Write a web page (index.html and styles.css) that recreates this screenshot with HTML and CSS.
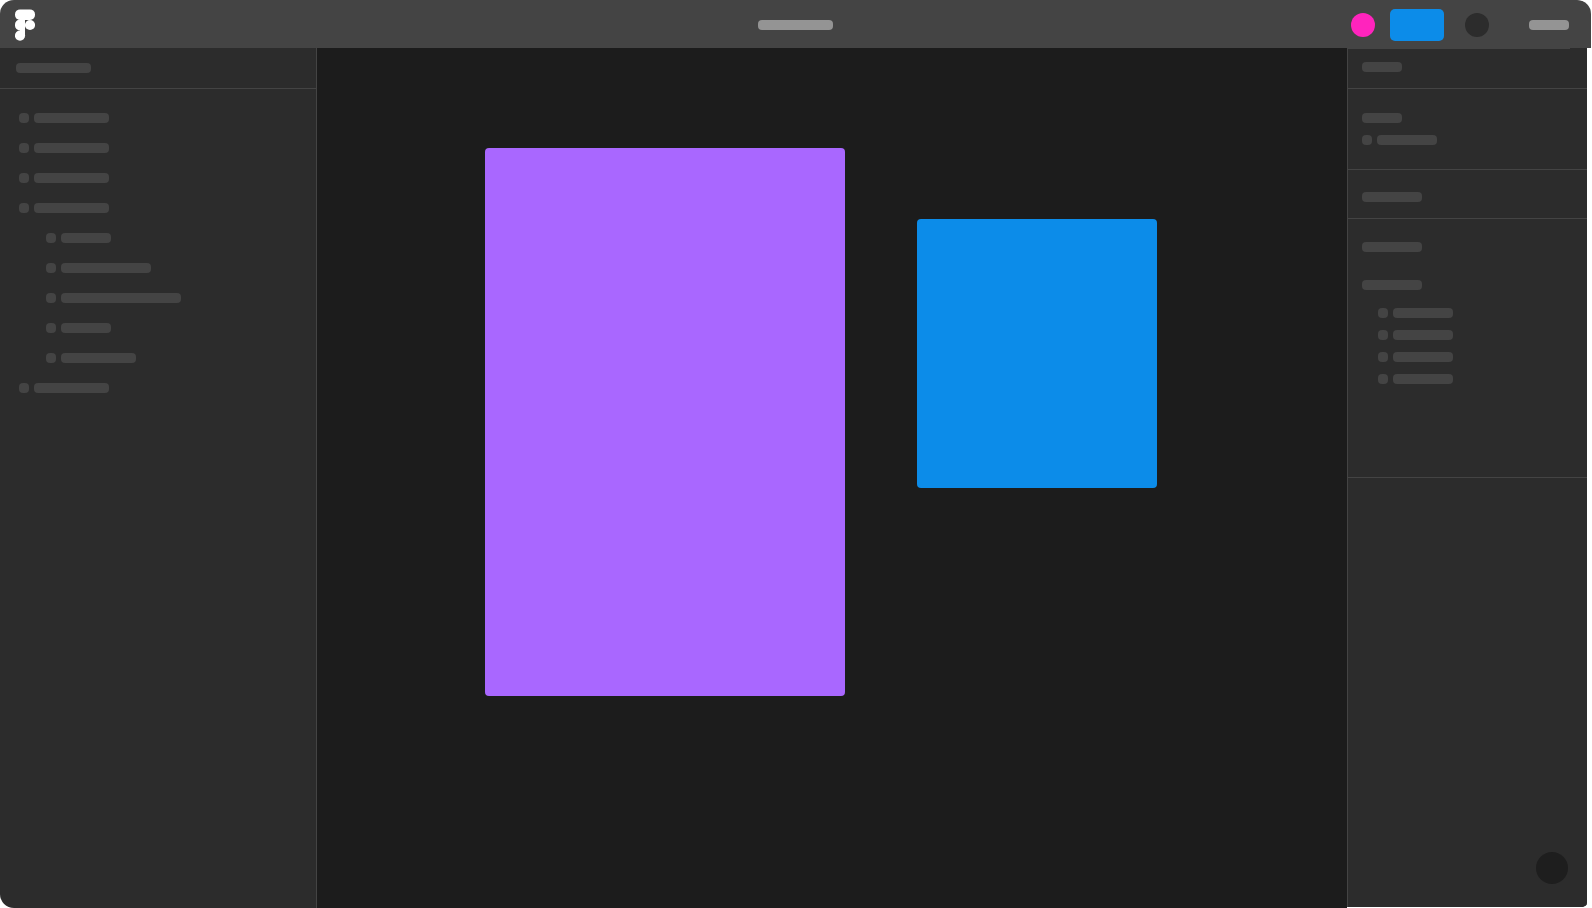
FILE: index.html
```html
<!DOCTYPE html>
<html lang="en">
<head>
<meta charset="utf-8">
<meta name="viewport" content="width=device-width, initial-scale=1">
<title>Design editor</title>
<link rel="stylesheet" href="styles.css">
</head>
<body>
<div class="app">
  <header class="topbar">
    <a class="logo" href="#" aria-label="Home">
      <svg width="20" height="32" viewBox="0 0 20 32" fill="#fff" aria-hidden="true">
        <rect x="0" y="0.4" width="20" height="10.6" rx="5"/>
        <rect x="0" y="10.6" width="10" height="10.8" rx="5"/>
        <rect x="5" y="10" width="5" height="16.6"/>
        <circle cx="5" cy="26.6" r="5.1"/>
        <circle cx="15" cy="16" r="5.1"/>
      </svg>
    </a>
    <span class="bar bar-light w75"></span>
    <div class="actions">
      <button class="avatar" type="button" aria-label="Account"></button>
      <button class="share" type="button" aria-label="Share"></button>
      <button class="present" type="button" aria-label="Present"></button>
      <span class="bar bar-light w40"></span>
    </div>
  </header>
  <div class="workspace">
    <aside class="layers">
      <div class="layers-head"><span class="bar w75"></span></div>
      <ul class="tree">
        <li class="row"><i class="dot"></i><span class="bar w75"></span></li>
        <li class="row"><i class="dot"></i><span class="bar w75"></span></li>
        <li class="row"><i class="dot"></i><span class="bar w75"></span></li>
        <li class="row"><i class="dot"></i><span class="bar w75"></span></li>
        <li>
          <ul class="branch">
            <li class="row"><i class="dot"></i><span class="bar w50"></span></li>
            <li class="row"><i class="dot"></i><span class="bar w90"></span></li>
            <li class="row"><i class="dot"></i><span class="bar w120"></span></li>
            <li class="row"><i class="dot"></i><span class="bar w50"></span></li>
            <li class="row"><i class="dot"></i><span class="bar w75"></span></li>
          </ul>
        </li>
        <li class="row"><i class="dot"></i><span class="bar w75"></span></li>
      </ul>
    </aside>
    <main class="canvas">
      <div class="frame frame-purple"></div>
      <div class="frame frame-blue"></div>
    </main>
    <aside class="inspector">
      <section class="section tabs"><span class="bar w40"></span></section>
      <section class="section layout">
        <span class="bar w40"></span>
        <div class="row"><i class="dot"></i><span class="bar w60"></span></div>
      </section>
      <section class="section fill"><span class="bar w60"></span></section>
      <section class="section styles">
        <span class="bar w60"></span>
        <div class="group">
          <span class="bar w60"></span>
          <ul class="options">
            <li class="row"><i class="dot"></i><span class="bar w60"></span></li>
            <li class="row"><i class="dot"></i><span class="bar w60"></span></li>
            <li class="row"><i class="dot"></i><span class="bar w60"></span></li>
            <li class="row"><i class="dot"></i><span class="bar w60"></span></li>
          </ul>
        </div>
      </section>
      <button class="help" type="button" aria-label="Help"></button>
    </aside>
  </div>
</div>
</body>
</html>
```
FILE: styles.css
```css
* { box-sizing: border-box; }

body {
  margin: 0;
  background: #fff;
  font-family: Inter, sans-serif;
}

ul { margin: 0; padding: 0; list-style: none; }
button { padding: 0; border: 0; cursor: pointer; }

.app {
  display: flex;
  flex-direction: column;
  min-height: 100vh;
  border-radius: 14px;
  overflow: hidden;
}

.topbar {
  display: grid;
  grid-template-columns: 1fr auto 1fr;
  align-items: center;
  height: 48px;
  margin-right: 1px;
  padding-top: 2px;
  border-top-right-radius: 14px;
  background: #444;
}

.logo { display: flex; justify-self: start; margin-left: 15px; }

.actions {
  display: flex;
  align-items: center;
  justify-self: end;
  margin-right: 22px;
}

.avatar, .present { width: 24px; height: 24px; border-radius: 50%; }
.avatar { margin-right: 15px; background: #ff24bd; }
.present { margin-right: 40px; background: #2c2c2c; }

.share {
  width: 54px;
  height: 32px;
  margin-right: 21px;
  border-radius: 5px;
  background: #0c8ce9;
}

.bar {
  display: block;
  height: 10px;
  border-radius: 4px;
  background: #444;
}
.bar-light { background: #949494; }
.dot {
  width: 10px;
  height: 10px;
  border-radius: 4px;
  background: #444;
}

.w40 { width: 40px; }
.w50 { width: 50px; }
.w60 { width: 60px; }
.w75 { width: 75px; }
.w90 { width: 90px; }
.w120 { width: 120px; }

.row { display: flex; gap: 5px; }

.workspace { display: flex; flex: 1; }

.layers {
  flex: 0 0 317px;
  border-right: 1px solid #444;
  background: #2c2c2c;
}
.layers-head { padding: 15px 16px; border-bottom: 1px solid #444; }
.tree, .branch { display: flex; flex-direction: column; gap: 20px; }
.tree { padding: 24px 19px; }
.branch { padding-left: 27px; }

.canvas {
  display: flex;
  flex: 1;
  align-items: flex-start;
  justify-content: center;
  gap: 72px;
  padding: 100px 22px 24px 0;
  background: #1c1c1c;
}
.frame { border-radius: 4px; }
.frame-purple { width: 360px; height: 548px; background: #a967ff; }
.frame-blue { width: 240px; height: 269px; margin-top: 71px; background: #0c8ce9; }

.inspector {
  display: flex;
  flex: 0 0 240px;
  flex-direction: column;
  margin: 0 5px 1px 0;
  border-left: 1px solid #444;
  border-bottom-right-radius: 4px;
  background: #2c2c2c;
}
.section {
  display: flex;
  flex-direction: column;
  padding: 0 14px;
  border-bottom: 1px solid #444;
}
.tabs {
  padding-top: 14px;
  padding-bottom: 16px;
  background: linear-gradient(#444, #444) no-repeat left top / calc(100% - 17px) 1px;
}
.layout { gap: 12px; padding-top: 24px; padding-bottom: 24px; }
.fill { padding-top: 22px; padding-bottom: 16px; }
.styles { gap: 28px; padding-top: 23px; padding-bottom: 93px; }
.group { display: flex; flex-direction: column; gap: 18px; }
.options { display: flex; flex-direction: column; gap: 12px; padding-left: 16px; }

.help {
  width: 32px;
  height: 32px;
  margin: auto 19px 23px auto;
  border-radius: 50%;
  background: #1e1e1e;
}
```
